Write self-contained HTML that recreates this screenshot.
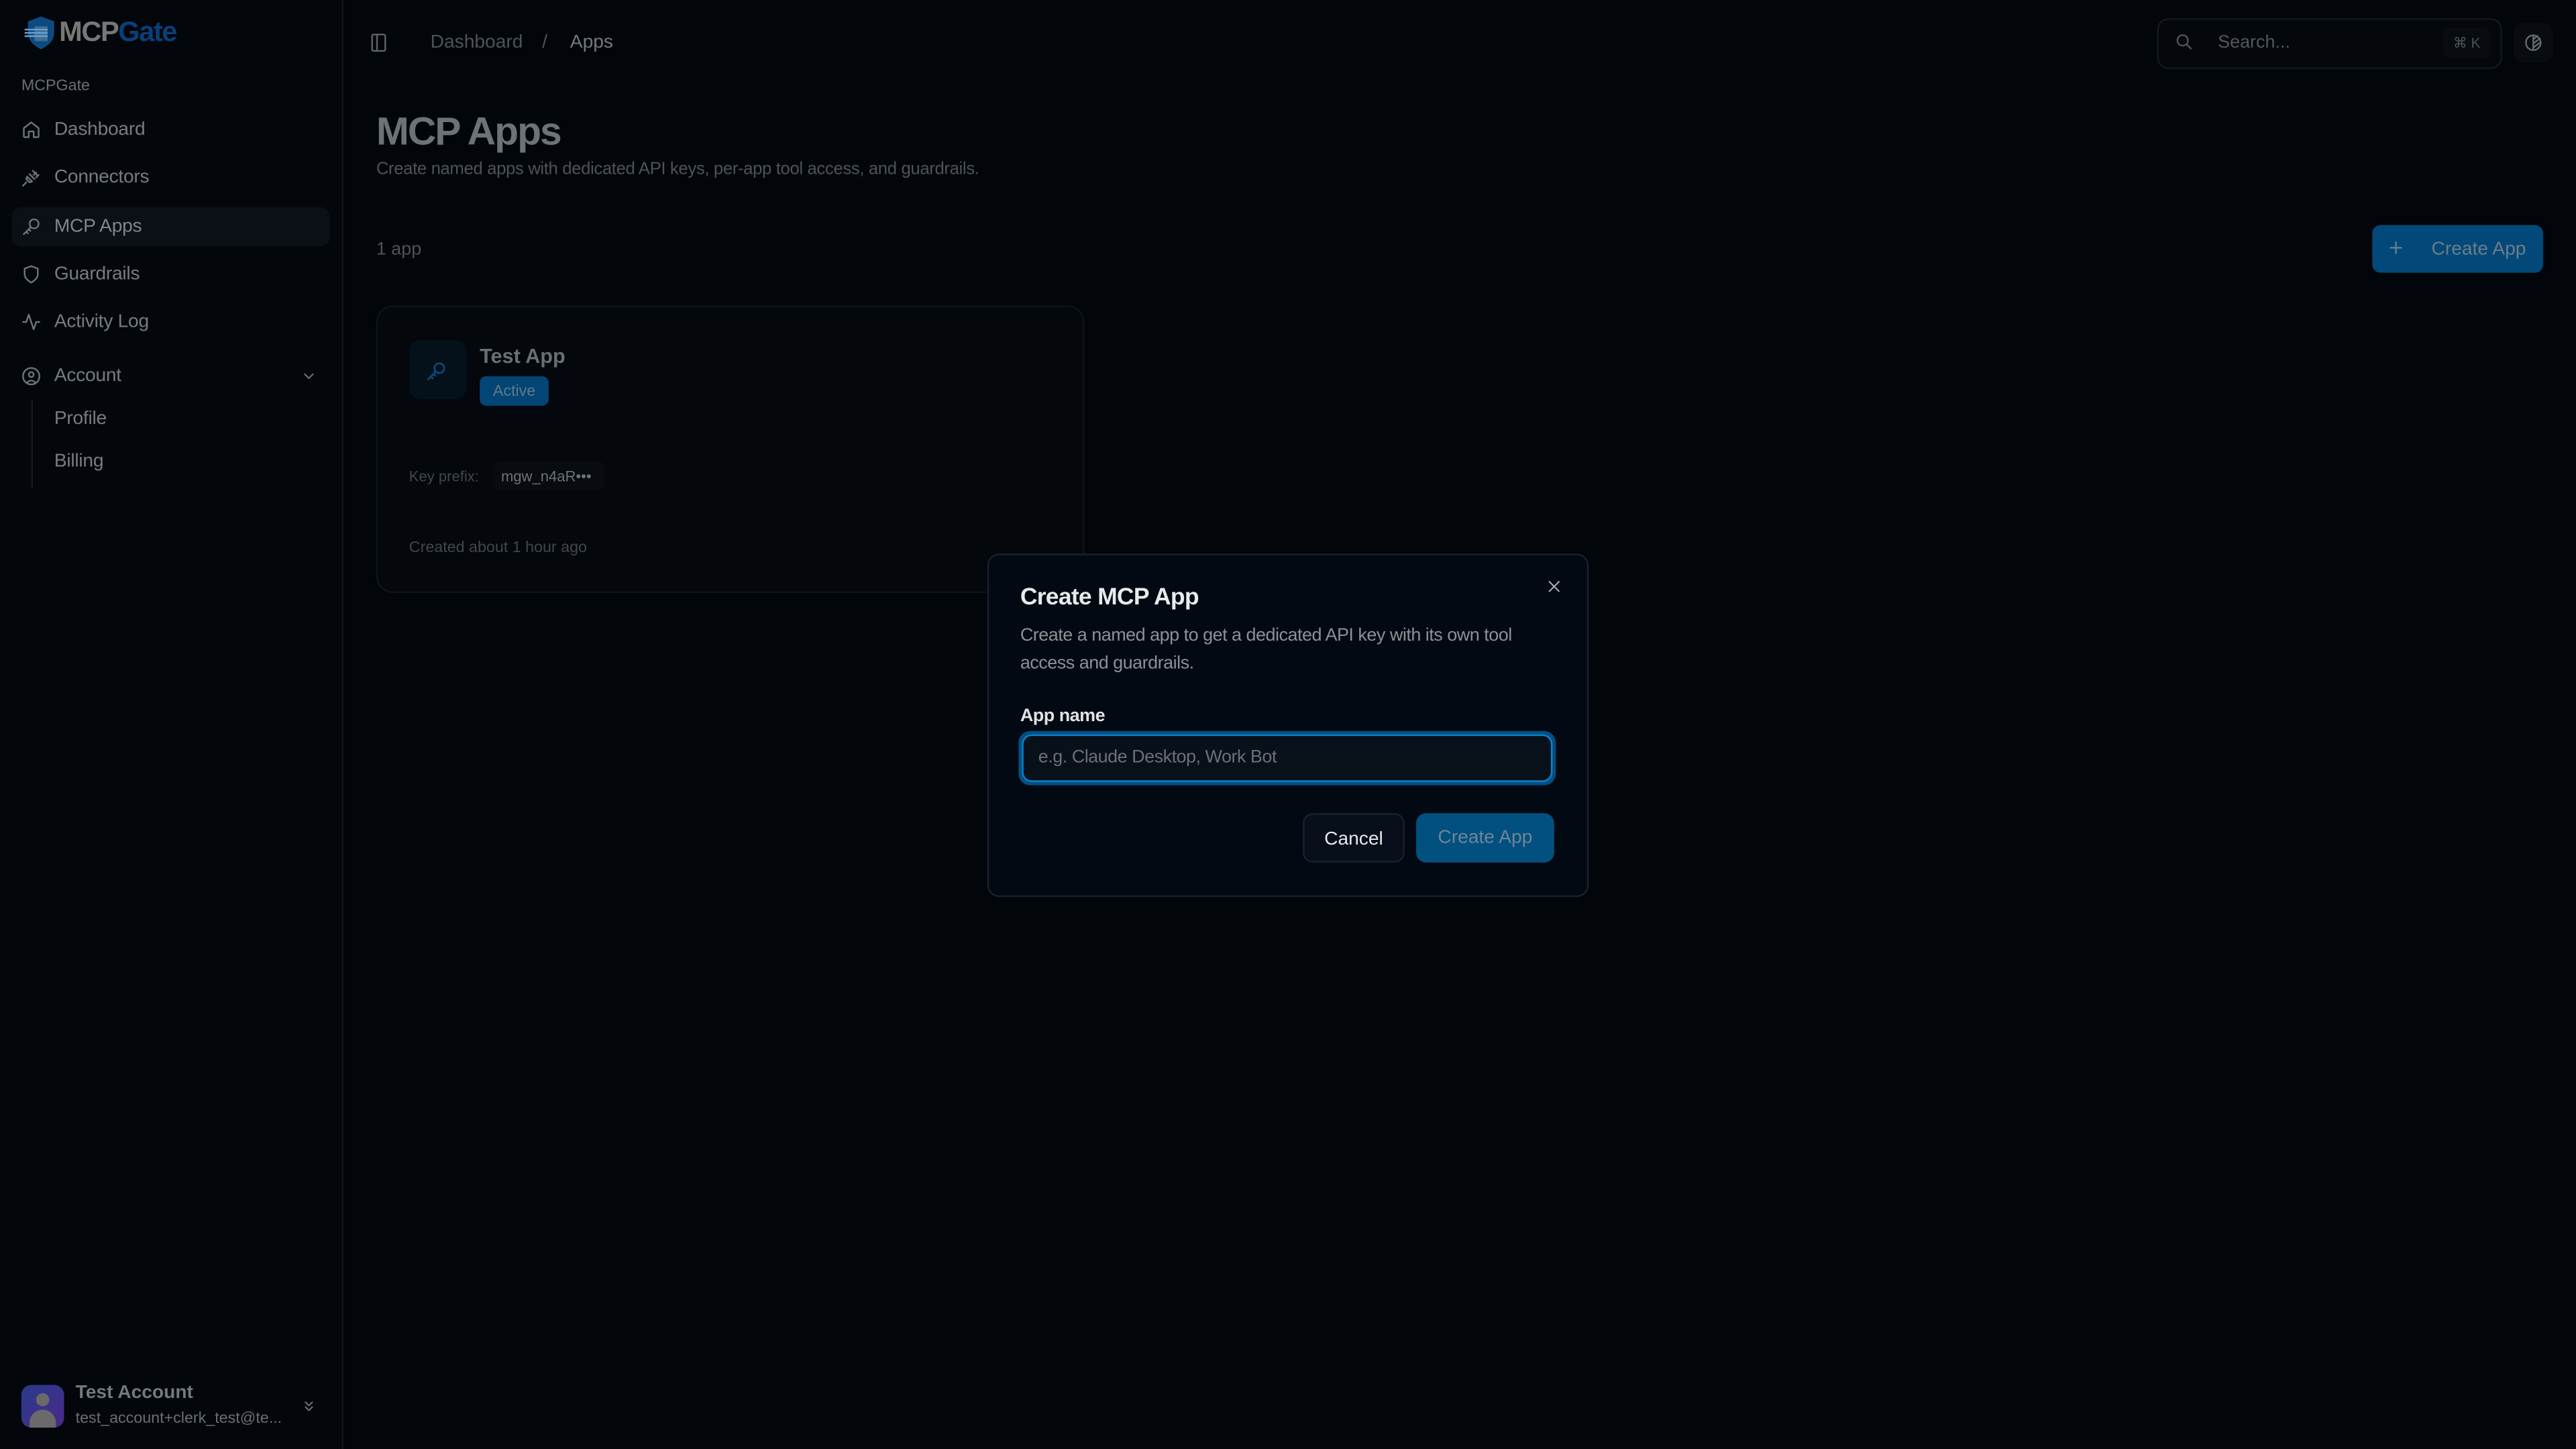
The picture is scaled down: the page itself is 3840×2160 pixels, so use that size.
<!DOCTYPE html>
<html><head><meta charset="utf-8"><style>
html,body{margin:0;padding:0;background:#020509;width:3840px;height:2160px;overflow:hidden}
#w{position:absolute;left:0;top:0;width:1568px;height:882px;transform:scale(2.44898);transform-origin:0 0;font-family:"Liberation Sans",sans-serif;color:#6e7378;background:#020509}
.a{position:absolute;white-space:nowrap}
svg.i{position:absolute;fill:none;stroke:currentColor;stroke-width:2;stroke-linecap:round;stroke-linejoin:round}
.nav{font-size:11.5px;color:#777c81;letter-spacing:-.1px}
</style></head><body><div id="w">
<!-- sidebar -->
<div class="a" style="left:0;top:0;width:208px;height:882px;background:#03060b;border-right:1px solid #11161c"></div>
<svg class="a" style="left:14px;top:10px" width="22" height="20" viewBox="0 0 22 20"><path d="M3 3 L11 0 L19 3 L19 10 Q19 16 11 20 Q3 16 3 10Z" fill="#0d4a80"/><rect x="7" y="6" width="8" height="9" fill="#3e6d96"/><path d="M1 8h14M1 10h14M1 12h14" stroke="#6ba0cf" stroke-width="1"/></svg>
<div class="a" style="left:36px;top:10px;font-size:17px;font-weight:bold;letter-spacing:-.6px"><span style="color:#777">MCP</span><span style="color:#0a3f7a">Gate</span></div>
<div class="a" style="left:13px;top:47px;font-size:9.5px;color:#6a6f74">MCPGate</div>
<div class="a" style="left:7px;top:126px;width:194px;height:24px;background:#0b1016;border-radius:6px"></div>
<svg class="i" style="left:13px;top:73px;color:#6e7378" width="12" height="12" viewBox="0 0 24 24"><path d="M3 10l9-7 9 7v10a1 1 0 0 1-1 1h-5v-7h-6v7H4a1 1 0 0 1-1-1z"/></svg>
<div class="a nav" style="left:33px;top:73px">Dashboard</div>
<svg class="i" style="left:13px;top:102px;color:#6e7378" width="12" height="12" viewBox="0 0 24 24"><path d="M2 22l4-4M7 11l6 6M10 8l6 6M18 6l-3 3M21 9l-3 3M7 11l-1 3 4 4 3-1M14 4l6 6"/></svg>
<div class="a nav" style="left:33px;top:102px">Connectors</div>
<svg class="i" style="left:13px;top:132px;color:#6e7378" width="12" height="12" viewBox="0 0 24 24"><circle cx="15.5" cy="8.5" r="5.5"/><path d="M11.5 12.5L3 21M6 18l2 2M9 15l2 2"/></svg>
<div class="a nav" style="left:33px;top:132px;color:#80858a">MCP Apps</div>
<svg class="i" style="left:13px;top:161px;color:#6e7378" width="12" height="12" viewBox="0 0 24 24"><path d="M12 22s8-4 8-10V5l-8-3-8 3v7c0 6 8 10 8 10z"/></svg>
<div class="a nav" style="left:33px;top:161px">Guardrails</div>
<svg class="i" style="left:13px;top:190px;color:#6e7378" width="12" height="12" viewBox="0 0 24 24"><path d="M22 12h-4l-3 9L9 3l-3 9H2"/></svg>
<div class="a nav" style="left:33px;top:190px">Activity Log</div>
<svg class="i" style="left:13px;top:223px;color:#6e7378" width="12" height="12" viewBox="0 0 24 24"><circle cx="12" cy="12" r="10"/><circle cx="12" cy="10" r="3"/><path d="M7 20a6 6 0 0 1 10 0"/></svg>
<div class="a nav" style="left:33px;top:223px">Account</div>
<svg class="i" style="left:183px;top:224px;color:#6e7378" width="10" height="10" viewBox="0 0 24 24"><path d="M6 9l6 6 6-6"/></svg>
<div class="a" style="left:19px;top:243px;width:1px;height:54px;background:#161b21"></div>
<div class="a nav" style="left:33px;top:249px">Profile</div>
<div class="a nav" style="left:33px;top:275px">Billing</div>
<div class="a" style="left:13px;top:843px;width:26px;height:26px;border-radius:6px;background:linear-gradient(135deg,#2a3a8a,#4a2a8a);overflow:hidden"><div class="a" style="left:9px;top:5px;width:8px;height:8px;border-radius:50%;background:#6a6a6a"></div><div class="a" style="left:5px;top:15px;width:16px;height:14px;border-radius:8px 8px 0 0;background:#6a6a6a"></div></div>
<div class="a" style="left:46px;top:842px;font-size:11.5px;font-weight:bold;color:#74797e">Test Account</div>
<div class="a" style="left:46px;top:858px;font-size:9.5px;color:#6a6f74">test_account+clerk_test@te...</div>
<svg class="i" style="left:183px;top:851px;color:#6e7378" width="10" height="10" viewBox="0 0 24 24"><path d="M7 6l5 5 5-5M7 13l5 5 5-5"/></svg>
<!-- top bar -->
<svg class="i" style="left:225px;top:20px;color:#5e6368" width="11" height="12" viewBox="0 0 20 24"><rect x="2" y="2" width="16" height="20" rx="2"/><path d="M8 2v20"/></svg>
<div class="a" style="left:262px;top:20px;font-size:11.5px;color:#4e5358">Dashboard</div>
<div class="a" style="left:330px;top:20px;font-size:11.5px;color:#4e5358">/</div>
<div class="a" style="left:347px;top:20px;font-size:11.5px;color:#73787d">Apps</div>
<div class="a" style="left:1313px;top:11px;width:208px;height:29px;border:1px solid #14191f;border-radius:7px;background:#04070c"></div>
<svg class="i" style="left:1324px;top:20px;color:#55595e" width="11" height="11" viewBox="0 0 24 24"><circle cx="10" cy="10" r="7"/><path d="M21 21l-6-6"/></svg>
<div class="a" style="left:1350px;top:20px;font-size:11px;color:#52575c">Search...</div>
<div class="a" style="left:1487px;top:17px;width:29px;height:18px;border-radius:4px;background:#080c11;font-size:8.5px;color:#4e5358;text-align:center;line-height:18px">⌘ K</div>
<div class="a" style="left:1530px;top:14px;width:24px;height:24px;border-radius:6px;background:#080c11"></div>
<svg class="i" style="left:1536px;top:20px;color:#62676c" width="12" height="12" viewBox="0 0 24 24"><circle cx="12" cy="12" r="9"/><path d="M12 3v18M12 8l5-4M12 13l8-6M12 18l8-6"/></svg>
<!-- main -->
<div class="a" style="left:229px;top:67px;font-size:24px;font-weight:bold;color:#6d7276;letter-spacing:-.8px">MCP Apps</div>
<div class="a" style="left:229px;top:97px;font-size:10.5px;color:#4e5358;letter-spacing:-.15px">Create named apps with dedicated API keys, per-app tool access, and guardrails.</div>
<div class="a" style="left:229px;top:146px;font-size:11px;color:#4e5358">1 app</div>
<div class="a" style="left:1444px;top:137px;width:104px;height:29px;border-radius:5px;background:#02497a"></div>
<div class="a" style="left:1454px;top:143px;font-size:15px;color:#5f7b90">+</div>
<div class="a" style="left:1480px;top:146px;font-size:11.5px;color:#6f7c86">Create App</div>
<div class="a" style="left:229px;top:186px;width:429px;height:173px;border:1px solid #0e1319;border-radius:10px;background:#04070c"></div>
<div class="a" style="left:249px;top:207px;width:35px;height:36px;border-radius:7px;background:#04101a"></div>
<svg class="i" style="left:259px;top:219px;color:#0a4c7e" width="13" height="14" viewBox="0 0 24 24"><circle cx="15.5" cy="8.5" r="5.5"/><path d="M11.5 12.5L3 21M6 18l2 2M9 15l2 2"/></svg>
<div class="a" style="left:292px;top:210px;font-size:12.5px;font-weight:bold;color:#6a6f74">Test App</div>
<div class="a" style="left:292px;top:229px;width:42px;height:18px;border-radius:4px;background:#034574;font-size:9.5px;color:#61798b;text-align:center;line-height:19px">Active</div>
<div class="a" style="left:249px;top:285px;font-size:9px;color:#42474c">Key prefix:</div>
<div class="a" style="left:301px;top:281px;width:67px;height:17px;border-radius:3px;background:#080b0f;font-size:9px;color:#6e7378;line-height:18px;text-indent:4px">mgw_n4aR•••</div>
<div class="a" style="left:249px;top:328px;font-size:9.5px;color:#42474c">Created about 1 hour ago</div>
<!-- dialog -->
<div class="a" style="left:601px;top:337px;width:364px;height:207px;border:1px solid #1b2129;border-radius:7px;background:#030912"></div>
<div class="a" style="left:621px;top:356px;font-size:14.5px;font-weight:bold;color:#e8eaec;letter-spacing:-.3px">Create MCP App</div>
<svg class="i" style="left:941px;top:352px;color:#b0b4b8;stroke-width:2" width="10" height="10" viewBox="0 0 24 24"><path d="M5 5l14 14M19 5L5 19"/></svg>
<div class="a" style="left:621px;top:379px;font-size:11px;line-height:16.5px;color:#8d9196;letter-spacing:-.2px">Create a named app to get a dedicated API key with its own tool<br>access and guardrails.</div>
<div class="a" style="left:621px;top:430px;font-size:11px;font-weight:bold;color:#e0e2e4;letter-spacing:-.2px">App name</div>
<div class="a" style="left:620px;top:445px;width:327px;height:33px;border-radius:7px;background:#034f80"></div>
<div class="a" style="left:622px;top:447px;width:321px;height:27px;border:1.5px solid #0b82d0;border-radius:6px;background:#08101a"></div>
<div class="a" style="left:632px;top:455px;font-size:11px;color:#6a7076;letter-spacing:-.2px">e.g. Claude Desktop, Work Bot</div>
<div class="a" style="left:793px;top:495px;width:60px;height:28px;border:1px solid #1a2028;border-radius:6px;background:#07101a;font-size:11.5px;color:#e6e8ea;text-align:center;line-height:30px">Cancel</div>
<div class="a" style="left:862px;top:495px;width:84px;height:30px;border-radius:6px;background:#02507f;font-size:11.5px;color:#6f8596;text-align:center;line-height:31px">Create App</div>
</div></body></html>
